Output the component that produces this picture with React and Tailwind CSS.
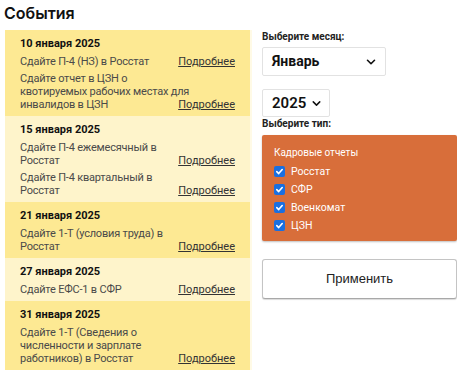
import { ChevronDown } from 'lucide-react';

const groups = [
  {
    date: '10 января 2025',
    dark: true,
    items: [
      ['Сдайте П-4 (НЗ) в Росстат'],
      ['Сдайте отчет в ЦЗН о', 'квотируемых рабочих местах для', 'инвалидов в ЦЗН'],
    ],
  },
  {
    date: '15 января 2025',
    dark: false,
    items: [
      ['Сдайте П-4 ежемесячный в', 'Росстат'],
      ['Сдайте П-4 квартальный в', 'Росстат'],
    ],
  },
  { date: '21 января 2025', dark: true, items: [['Сдайте 1-Т (условия труда) в', 'Росстат']] },
  { date: '27 января 2025', dark: false, items: [['Сдайте ЕФС-1 в СФР']] },
  {
    date: '31 января 2025',
    dark: true,
    items: [['Сдайте 1-Т (Сведения о', 'численности и зарплате', 'работников) в Росстат']],
  },
];

const types = ['Росстат', 'СФР', 'Военкомат', 'ЦЗН'];

function Check() {
  return (
    <span className="w-[11px] h-[11px] rounded-[2px] bg-[#1a6fe0] flex items-center justify-center shrink-0">
      <svg width="9" height="9" viewBox="0 0 10 10" fill="none">
        <path d="M2 5.2 L4.1 7.3 L8 2.8" stroke="white" strokeWidth="1.8" strokeLinecap="round" strokeLinejoin="round" />
      </svg>
    </span>
  );
}

export default function App() {
  return (
    <div className="w-[457px] h-[378px] bg-white overflow-hidden font-['Roboto',sans-serif]">
      <h1 className="pl-[4px] pt-[2px] h-[30px] text-[16px] font-semibold text-[#111] leading-[22px] font-['Inter',sans-serif]">
        События
      </h1>
      <div className="flex pl-[5px] gap-[10px]">
        <div className="w-[247px] flex flex-col border-r-2 border-[#fffae6]">
          {groups.map((g) => (
            <div key={g.date} className={`${g.dark ? 'bg-[#fde993]' : 'bg-[#fef4cb]'} pl-[15px] pr-[15px] pt-[7px] pb-[5px]`}>
              <p className="text-[11px] font-bold text-[#111] leading-[13px]">{g.date}</p>
              <div className="mt-[5px] flex flex-col gap-[4px]">
                {g.items.map((lines) => (
                  <div key={lines[0]} className="flex justify-between items-end">
                    <p className="flex-1 min-w-0 text-[11px] text-[#4a4a4a] leading-[13px] whitespace-nowrap tracking-[-0.2px]">
                      {lines.map((l, i) => (
                        <span key={i} className="block">{l}</span>
                      ))}
                    </p>
                    <a className="shrink-0 text-[11px] text-[#333] underline leading-[13px]">Подробнее</a>
                  </div>
                ))}
              </div>
            </div>
          ))}
        </div>
        <div className="w-[195px] pt-[1px]">
          <p className="text-[10px] font-bold text-[#222] leading-[12px]">Выберите месяц:</p>
          <div className="mt-[4px] w-[124px] h-[29px] border border-[#e2e2e2] rounded-[2px] flex items-center justify-between pl-[9px] pr-[7px]">
            <span className="text-[14px] font-bold text-[#111]">Январь</span>
            <ChevronDown size={14} strokeWidth={2.75} className="text-[#111]" />
          </div>
          <div className="mt-[13px] w-[68px] h-[28px] border border-[#e2e2e2] rounded-[2px] flex items-center justify-between pl-[9px] pr-[6px]">
            <span className="text-[15px] font-semibold text-[#111]">2025</span>
            <ChevronDown size={13} strokeWidth={2.75} className="text-[#111]" />
          </div>
          <p className="mt-[1px] text-[10px] font-bold text-[#222] leading-[12px]">Выберите тип:</p>
          <div className="mt-[5px] h-[106px] bg-[#d86e3a] rounded-[2px] shadow-[0_1px_2px_rgba(0,0,0,0.25)] pl-[12px] pt-[11px]">
            <p className="text-[10px] text-white leading-[14px]">Кадровые отчеты</p>
            <div className="mt-[5px] flex flex-col gap-[5px]">
              {types.map((t) => (
                <label key={t} className="flex items-center gap-[6px] h-[13px]">
                  <Check />
                  <span className="text-[10.5px] text-white">{t}</span>
                </label>
              ))}
            </div>
          </div>
          <button className="mt-[18px] w-[195px] h-[40px] bg-white border border-[#c4c4c4] border-b-[#a8a8a8] rounded-[3px] shadow-[0_1px_1px_rgba(0,0,0,0.15)] text-[13px] text-[#222] font-['Liberation_Sans',sans-serif]">
            Применить
          </button>
        </div>
      </div>
    </div>
  );
}
